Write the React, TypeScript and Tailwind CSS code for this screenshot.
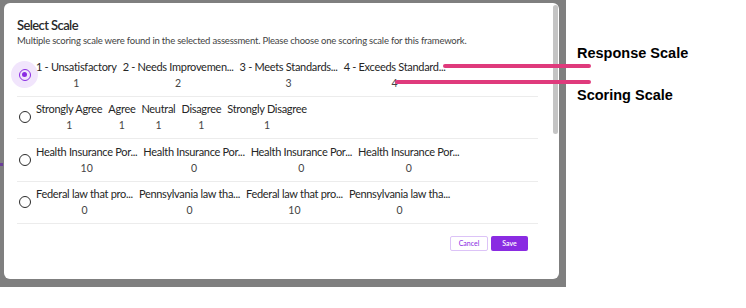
import { useState } from "react"

interface ScaleOption {
  id: number
  items: { label: string; score: string }[]
}

const scales: ScaleOption[] = [
  {
    id: 1,
    items: [
      { label: "1 - Unsatisfactory", score: "1" },
      { label: "2 - Needs Improvemen...", score: "2" },
      { label: "3 - Meets Standards...", score: "3" },
      { label: "4 - Exceeds Standard...", score: "4" },
    ],
  },
  {
    id: 2,
    items: [
      { label: "Strongly Agree", score: "1" },
      { label: "Agree", score: "1" },
      { label: "Neutral", score: "1" },
      { label: "Disagree", score: "1" },
      { label: "Strongly Disagree", score: "1" },
    ],
  },
  {
    id: 3,
    items: [
      { label: "Health Insurance Por...", score: "10" },
      { label: "Health Insurance Por...", score: "0" },
      { label: "Health Insurance Por...", score: "0" },
      { label: "Health Insurance Por...", score: "0" },
    ],
  },
  {
    id: 4,
    items: [
      { label: "Federal law that pro...", score: "0" },
      { label: "Pennsylvania law tha...", score: "0" },
      { label: "Federal law that pro...", score: "10" },
      { label: "Pennsylvania law tha...", score: "0" },
    ],
  },
]

function Radio({ checked }: { checked: boolean }) {
  if (checked) {
    return (
      <span className="flex h-[27px] w-[27px] shrink-0 items-center justify-center rounded-full bg-[#f1e5fc]">
        <span className="flex h-[12px] w-[12px] items-center justify-center rounded-full border-[1.5px] border-[#8a2be2]">
          <span className="h-[5px] w-[5px] rounded-full bg-[#8a2be2]" />
        </span>
      </span>
    )
  }
  return (
    <span className="flex h-[27px] w-[27px] shrink-0 items-center justify-center">
      <span className="h-[12px] w-[12px] rounded-full border-[1.5px] border-[#2b2b2b]" />
    </span>
  )
}

export default function App() {
  const [selected, setSelected] = useState(1)

  return (
    <div className="relative h-[308px] w-[746px] overflow-hidden bg-white font-['Lato',sans-serif]">
      <div className="flex">
        {/* dimmed page + modal */}
        <div className="relative h-[287px] w-[566px] shrink-0 bg-[#7f7f7f] pl-[4px] pt-[3px]">
          <span className="absolute left-0 top-[163px] h-[3px] w-[3px] bg-[#6b3f9a]" />
          <div className="flex h-[276px] w-[555px] rounded-[6px] bg-white">
            <div className="w-[534px] pl-[13px]">
              <h2 className="pt-[13px] text-[13px] font-semibold leading-[18px] tracking-[-0.6px] text-[#2a2a2a]">Select Scale</h2>
              <p className="whitespace-nowrap text-[9.5px] leading-[14px] tracking-[-0.2px] text-[#444]">
                Multiple scoring scale were found in the selected assessment. Please choose one scoring scale for this framework.
              </p>

              <div className="mt-[6px]">
                {scales.map((scale) => (
                  <button
                    key={scale.id}
                    onClick={() => setSelected(scale.id)}
                    className="flex h-[42.5px] w-full items-center border-b border-[#ececec] text-left"
                  >
                    <span className="-ml-[6px] mr-[-2px]">
                      <Radio checked={selected === scale.id} />
                    </span>
                    <div className="flex gap-[6px]">
                      {scale.items.map((item, i) => (
                        <div key={i} className="flex flex-col items-center">
                          <span className="whitespace-nowrap text-[11px] leading-[16px] tracking-[-0.3px] text-[#262626]">{item.label}</span>
                          <span className="text-[10.5px] leading-[16px] text-[#444]">{item.score}</span>
                        </div>
                      ))}
                    </div>
                  </button>
                ))}
              </div>

              <div className="mt-[12px] flex justify-end gap-[3px] pr-[10px]">
                <button className="h-[15px] w-[38px] rounded-[2px] border border-[#dcc3f7] bg-white text-[7px] text-[#8a2be2]">
                  Cancel
                </button>
                <button className="h-[15px] w-[37px] rounded-[2px] bg-[#8a2be2] text-[7px] font-semibold text-white">
                  Save
                </button>
              </div>
            </div>

            {/* scrollbar */}
            <div className="ml-[15px] pt-[2px]">
              <div className="h-[129px] w-[5px] rounded-full bg-[#c4c4c4]" />
            </div>
          </div>
        </div>

        {/* annotations */}
        <div className="pl-[11px] pt-[45px] font-['Liberation_Sans',Arial,sans-serif] text-[14.5px] font-bold text-black">
          <div className="leading-[16px]">Response Scale</div>
          <div className="mt-[26px] leading-[16px]">Scoring Scale</div>
        </div>
      </div>

      {/* callout lines */}
      <span className="absolute left-[443px] top-[64px] h-[4px] w-[148px] rounded-full bg-[#df3a7c]" />
      <span className="absolute left-[395px] top-[80px] h-[4px] w-[196px] rounded-full bg-[#df3a7c]" />
    </div>
  )
}
